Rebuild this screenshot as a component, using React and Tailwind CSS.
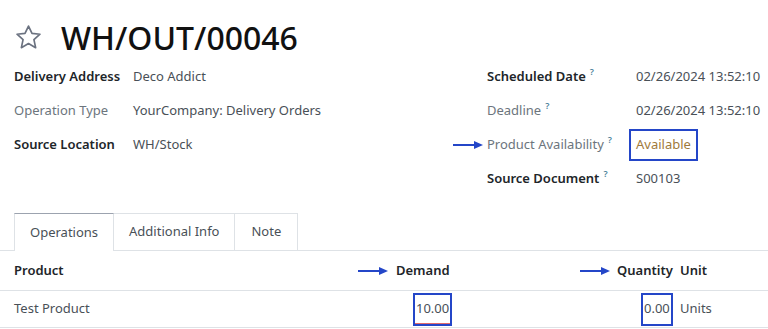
const Arrow = ({ className = "" }) => (
  <svg width="30" height="10" viewBox="0 0 30 10" className={className}>
    <line x1="0" y1="5" x2="22" y2="5" stroke="#2446c8" strokeWidth="2" />
    <polygon points="21,1 30,5 21,9" fill="#2446c8" />
  </svg>
);

const Help = () => (
  <span className="relative top-[-6px] ml-[4px] text-[9px] text-[#4a7f9a] font-semibold">?</span>
);

const Field = ({ label, value, strong, help, labelW }) => (
  <div className="flex items-center h-[34px]">
    <div className={labelW}>
      <span className={strong ? "font-semibold text-[#212529]" : "text-[#6c757d]"}>{label}</span>
      {help && <Help />}
    </div>
    <div className="text-[#495057]">{value}</div>
  </div>
);

export default function App() {
  return (
    <div
      className="w-[768px] h-[329px] bg-white overflow-hidden text-[13px]"
      style={{ fontFamily: "'Noto Sans', sans-serif" }}
    >
      <div className="flex items-center gap-[17px] pl-[13px] pt-[15px] h-[60px]">
        <svg width="31" height="29" viewBox="0 0 24 24" fill="none" stroke="#6b7280" strokeWidth="1.4" strokeLinejoin="round">
          <polygon points="12,2.5 14.9,8.6 21.5,9.3 16.5,13.8 17.9,20.4 12,17 6.1,20.4 7.5,13.8 2.5,9.3 9.1,8.6" />
        </svg>
        <h1 className="text-[32px] font-medium text-[#111] leading-none">WH/OUT/00046</h1>
      </div>

      <div className="flex pl-[14px]">
        <div className="w-[473px]">
          <Field label="Delivery Address" value="Deco Addict" strong labelW="w-[119px]" />
          <Field label="Operation Type" value="YourCompany: Delivery Orders" labelW="w-[119px]" />
          <Field label="Source Location" value="WH/Stock" strong labelW="w-[119px]" />
        </div>
        <div className="relative">
          <Field label="Scheduled Date" value="02/26/2024 13:52:10" strong help labelW="w-[149px]" />
          <Field label="Deadline" value="02/26/2024 13:52:10" help labelW="w-[149px]" />
          <div className="flex items-center h-[34px]">
            <div className="w-[142px]">
              <span className="text-[#6c757d]">Product Availability</span>
              <Help />
            </div>
            <div className="border-2 border-[#2446c8] px-[5px] h-[32px] flex items-center text-[#a07a3c]">Available</div>
            <Arrow className="absolute left-[-34px]" />
          </div>
          <Field label="Source Document" value="S00103" strong help labelW="w-[149px]" />
        </div>
      </div>

      <div className="mt-[17px] border-b border-[#dee2e6] flex pl-[14px] h-[38px]">
        <div className="px-[15px] flex items-center border border-b-0 border-[#dee2e6] border-t-[#9ca3af] bg-white text-[#495057] -mb-px">Operations</div>
        <div className="px-[15px] flex items-center border-t border-r border-[#dee2e6] text-[#495057]">Additional Info</div>
        <div className="px-[16px] flex items-center border-t border-r border-[#dee2e6] text-[#495057]">Note</div>
      </div>

      <div className="flex items-center h-[40px] border-b border-[#dee2e6] font-semibold text-[#212529]">
        <div className="pl-[14px] w-[396px]">Product</div>
        <div className="relative w-[221px]">
          Demand
          <Arrow className="absolute left-[-38px] top-[5px]" />
        </div>
        <div className="relative w-[63px]">
          Quantity
          <Arrow className="absolute left-[-37px] top-[5px]" />
        </div>
        <div>Unit</div>
      </div>

      <div className="flex items-center h-[37px] border-b border-[#dee2e6] text-[#495057]">
        <div className="pl-[14px] w-[413px]">Test Product</div>
        <div className="w-[228px]">
          <span className="inline-flex items-center h-[33px] px-[1px] border-2 border-[#2446c8] shadow-[inset_0_-1px_0_#e06a6a]">10.00</span>
        </div>
        <div className="w-[39px]">
          <span className="inline-flex items-center h-[33px] px-[1px] border-2 border-[#2446c8]">0.00</span>
        </div>
        <div>Units</div>
      </div>
    </div>
  );
}
